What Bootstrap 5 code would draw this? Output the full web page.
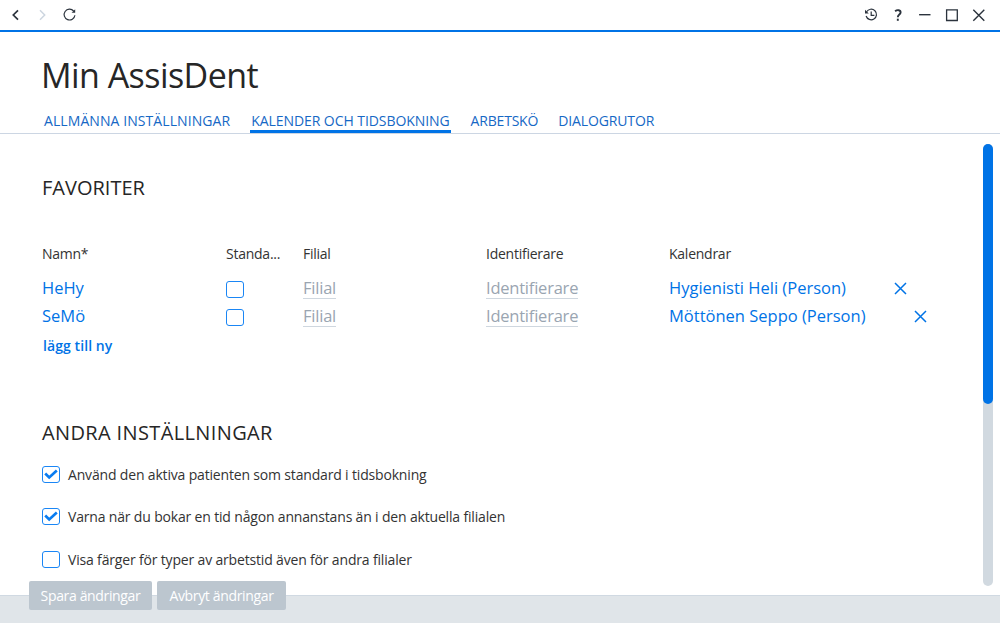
<!DOCTYPE html>
<html lang="sv">
<head>
    <meta charset="UTF-8" />
    <meta name="viewport" content="width=device-width, initial-scale=1.0"/>
    <title>Min AssisDent</title>
    <!-- Bootstrap CSS -->
    <link href="https://cdn.jsdelivr.net/npm/bootstrap@5.3.0/dist/css/bootstrap.min.css" rel="stylesheet">
    <style>
        body {
            font-family: "Open Sans", "Noto Sans", sans-serif;
            font-size: 14px;
            color: #333;
            letter-spacing: -0.17px;
        }
        svg {
            display: block;
            fill: none;
        }
        .window-bar {
            height: 32px;
            border-bottom: 2px solid #0073e6;
            color: #2b333d;
            padding: 0 12px 0 7px;
        }
        .window-bar .btn {
            --bs-btn-padding-x: 0;
            --bs-btn-padding-y: 0;
            --bs-btn-color: #2b333d;
            --bs-btn-border-width: 0;
            width: 18px;
        }
        .window-bar .btn:disabled {
            --bs-btn-disabled-color: #cdd6e0;
            --bs-btn-disabled-opacity: 1;
        }
        .page-title {
            height: 78px;
            padding: 19px 0 0 41px;
            font-size: 34px;
            font-weight: 400;
            line-height: 48px;
            letter-spacing: -0.55px;
            color: #262626;
        }
        .page-tabs {
            height: 24px;
            padding-left: 44px;
            gap: 20px;
            border-bottom: 1px solid #ccd6e3;
        }
        .page-tabs .nav-link {
            --bs-nav-link-padding-x: 0;
            --bs-nav-link-padding-y: 0;
            height: 23px;
            line-height: 22px;
            font-size: 14px;
            color: #1668c5;
            border-bottom: 3px solid transparent;
            white-space: nowrap;
        }
        .page-tabs .nav-link.active {
            border-bottom-color: #0073e6;
            padding: 0 1px;
        }
        .tab-a { letter-spacing: 0.08px; }
        .tab-b { letter-spacing: -0.07px; }
        .tab-c { letter-spacing: -0.2px; }
        .tab-d { letter-spacing: -0.12px; }
        .page-body {
            min-height: 0;
            padding: 0 7px 0 42px;
        }
        .section-title {
            font-size: 20px;
            font-weight: 400;
            line-height: 30px;
            color: #262626;
            margin: 0;
        }
        .favorites .section-title { letter-spacing: 0; }
        .other-settings .section-title { letter-spacing: 0.37px; }
        .fav-row {
            display: grid;
            grid-template-columns: 184px 77px 183px 183px 1fr;
            height: 28.5px;
            align-items: center;
            font-size: 16.5px;
            letter-spacing: 0;
            color: #0073e6;
        }
        .fav-head {
            height: 24px;
            font-size: 14px;
            letter-spacing: -0.25px;
            color: #333;
        }
        .fav-row .form-check-input {
            position: relative;
            top: 1px;
        }
        .empty-field {
            color: #9aa5b1;
            border-bottom: 1px solid #cfd7df;
            line-height: 20px;
            letter-spacing: -0.22px;
            display: inline-block;
        }
        .add-new {
            height: 28.5px;
            line-height: 29px;
            padding-left: 1px;
            font-size: 14px;
            font-weight: 600;
            letter-spacing: 0.08px;
            color: #0073e6;
            text-decoration: none;
        }
        .form-check-input {
            width: 18px;
            height: 17px;
            margin: 0;
            border: 1px solid #1a86f5;
            border-radius: 3px !important;
        }
        .form-check-input:checked {
            background-color: #fff;
            border-color: #1a86f5;
            background-image: url("data:image/svg+xml,%3csvg xmlns='http://www.w3.org/2000/svg' viewBox='0 0 16 15'%3e%3cpath d='M2.2 6.6l4 3.8L13.8 3.6' fill='none' stroke='%230a7cf0' stroke-width='2.7'/%3e%3c/svg%3e");
        }
        .setting-row {
            height: 42.4px;
            gap: 8px;
        }
        .scroll-track {
            width: 10px;
            margin: 10px 0 9px;
            background: #d1d9e0;
            border-radius: 5px;
        }
        .scroll-thumb {
            height: 260px;
            background: #0073e6;
            border-radius: 5px;
        }
        .action-bar {
            height: 28px;
            background: #e0e5e9;
            border-top: 1px solid #d0d9e2;
            padding-left: 29px;
            gap: 5px;
        }
        /* Buttons stick out above the bar */
        .action-bar .btn {
            --bs-btn-padding-x: 0;
            --bs-btn-padding-y: 0;
            --bs-btn-font-size: 14px;
            --bs-btn-line-height: 29px;
            --bs-btn-border-width: 0;
            --bs-btn-border-radius: 2px;
            --bs-btn-disabled-color: #fff;
            --bs-btn-disabled-bg: #bcc6cf;
            --bs-btn-disabled-opacity: 1;
            height: 29px;
            margin-top: -15px;
            letter-spacing: -0.35px;
        }
        .btn-save { width: 123px; }
        .btn-cancel { width: 129px; }
    </style>
</head>
<body class="bg-white">
    <div class="d-flex flex-column vh-100 overflow-hidden">
        <header class="window-bar d-flex justify-content-between align-items-center">
            <div class="d-flex" style="gap: 9px">
                <button class="btn" type="button" aria-label="Bakåt">
                    <svg width="18" height="18" stroke="currentColor" stroke-width="1.7"><path d="M11 4.3L6.3 9l4.7 4.7"/></svg>
                </button>
                <button class="btn" type="button" aria-label="Framåt" disabled>
                    <svg width="18" height="18" stroke="currentColor" stroke-width="1.5"><path d="M6 4.3L10.7 9 6 13.7"/></svg>
                </button>
                <button class="btn" type="button" aria-label="Uppdatera">
                    <svg width="18" height="18" stroke="currentColor" stroke-width="1.2"><path d="M12.6 5A5.4 5.4 0 1 0 13.9 9.2"/><path d="M14.2 3.2v3.6h-3.6z" fill="currentColor" stroke="none"/></svg>
                </button>
            </div>
            <div class="d-flex" style="gap: 9px">
                <button class="btn" type="button" aria-label="Historik">
                    <svg width="18" height="18" stroke="currentColor" stroke-width="1.2"><path d="M4.6 5.8A5.3 5.3 0 1 1 4.1 10"/><path d="M9.2 5.6v3.8h3.2"/><path d="M3 3.8v3.6h3.8z" fill="currentColor" stroke="none"/></svg>
                </button>
                <button class="btn" type="button" aria-label="Hjälp">
                    <svg width="18" height="18" stroke="currentColor" stroke-width="1.9"><path d="M6.1 5.2C8.4 3.3 11.7 4 11.6 6.5 11.5 8.6 8.8 8.5 8.8 11.2"/><path d="M8.8 12.7v2.1"/></svg>
                </button>
                <button class="btn" type="button" aria-label="Minimera">
                    <svg width="18" height="18" stroke="currentColor" stroke-width="1.4"><path d="M3.1 8.7h11.4"/></svg>
                </button>
                <button class="btn" type="button" aria-label="Maximera">
                    <svg width="18" height="18" stroke="currentColor" stroke-width="1.3"><path d="M3.6 3.8h10.7v10.7H3.6z"/></svg>
                </button>
                <button class="btn" type="button" aria-label="Stäng">
                    <svg width="18" height="18" stroke="currentColor" stroke-width="1.4"><path d="M3.3 3.7l11 11M14.3 3.7l-11 11"/></svg>
                </button>
            </div>
        </header>

        <h1 class="page-title m-0">Min AssisDent</h1>
        <nav class="nav page-tabs flex-nowrap">
            <a class="nav-link tab-a" href="#">ALLMÄNNA INSTÄLLNINGAR</a>
            <a class="nav-link tab-b active" href="#">KALENDER OCH TIDSBOKNING</a>
            <a class="nav-link tab-c" href="#">ARBETSKÖ</a>
            <a class="nav-link tab-d" href="#">DIALOGRUTOR</a>
        </nav>

        <main class="page-body d-flex flex-grow-1">
            <div class="flex-grow-1">
                <section class="favorites">
                    <h2 class="section-title" style="padding-top: 39px">FAVORITER</h2>
                    <div class="fav-row fav-head" style="margin: 38px 0 9px">
                        <div>Namn*</div>
                        <div>Standa...</div>
                        <div>Filial</div>
                        <div>Identifierare</div>
                        <div>Kalendrar</div>
                    </div>
                    <div class="fav-row">
                        <div>HeHy</div>
                        <div><input class="form-check-input d-block" type="checkbox" aria-label="Standard"></div>
                        <div><span class="empty-field">Filial</span></div>
                        <div><span class="empty-field">Identifierare</span></div>
                        <div class="d-flex align-items-center">
                            <span>Hygienisti Heli (Person)</span>
                            <svg style="margin-left: 48px" width="13" height="13" stroke="currentColor" stroke-width="1.5"><path d="M1 1l11 11M12 1L1 12"/></svg>
                        </div>
                    </div>
                    <div class="fav-row">
                        <div>SeMö</div>
                        <div><input class="form-check-input d-block" type="checkbox" aria-label="Standard"></div>
                        <div><span class="empty-field">Filial</span></div>
                        <div><span class="empty-field">Identifierare</span></div>
                        <div class="d-flex align-items-center">
                            <span>Möttönen Seppo (Person)</span>
                            <svg style="margin-left: 48px" width="13" height="13" stroke="currentColor" stroke-width="1.5"><path d="M1 1l11 11M12 1L1 12"/></svg>
                        </div>
                    </div>
                    <a class="add-new d-block" href="#">lägg till ny</a>
                </section>

                <section class="other-settings">
                    <h2 class="section-title" style="padding-top: 58px">ANDRA INSTÄLLNINGAR</h2>
                    <div style="margin-top: 5.6px">
                        <label class="setting-row d-flex align-items-center">
                            <input class="form-check-input" type="checkbox" checked>
                            <span>Använd den aktiva patienten som standard i tidsbokning</span>
                        </label>
                        <label class="setting-row d-flex align-items-center">
                            <input class="form-check-input" type="checkbox" checked>
                            <span>Varna när du bokar en tid någon annanstans än i den aktuella filialen</span>
                        </label>
                        <label class="setting-row d-flex align-items-center">
                            <input class="form-check-input" type="checkbox">
                            <span>Visa färger för typer av arbetstid även för andra filialer</span>
                        </label>
                    </div>
                </section>
            </div>
            <div class="scroll-track flex-shrink-0">
                <div class="scroll-thumb"></div>
            </div>
        </main>

        <footer class="action-bar d-flex flex-shrink-0">
            <button class="btn btn-secondary btn-save" type="button" disabled>Spara ändringar</button>
            <button class="btn btn-secondary btn-cancel" type="button" disabled>Avbryt ändringar</button>
        </footer>
    </div>
    <script src="https://cdn.jsdelivr.net/npm/bootstrap@5.3.0/dist/js/bootstrap.bundle.min.js"></script>
</body>
</html>
